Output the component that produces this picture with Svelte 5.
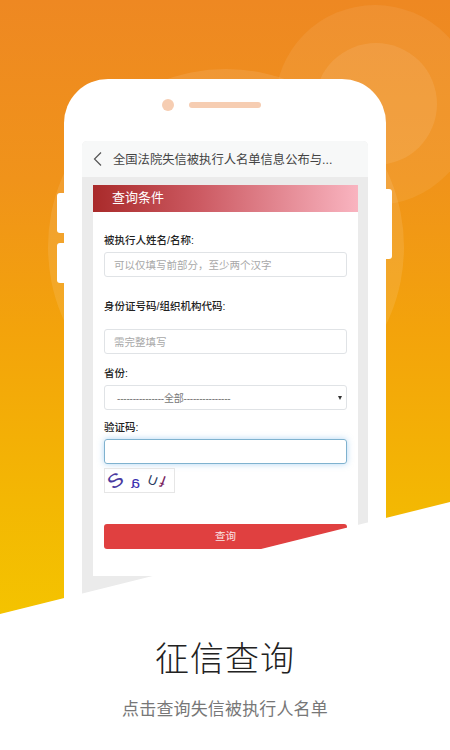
<script>
  const captcha = [
    { ch: "S", cls: "c1" },
    { ch: "a", cls: "c2" },
    { ch: "U", cls: "c3" },
    { ch: "f", cls: "c4" },
  ];
</script>

<div class="page">
  <div class="circle back"></div>
  <div class="circle big"></div>
  <div class="circle small"></div>

  <div class="phone">
    <span class="side left-a"></span>
    <span class="side left-b"></span>
    <span class="side right-a"></span>

    <div class="speaker">
      <span class="dot"></span>
      <span class="slot"></span>
    </div>

    <div class="screen">
      <div class="titlebar">
        <svg class="back-icon" width="10" height="16" viewBox="0 0 10 16">
          <path d="M8 1.5 1.5 8 8 14.5" fill="none" stroke="#555" stroke-width="1.2" />
        </svg>
        <span class="title">全国法院失信被执行人名单信息公布与...</span>
      </div>

      <div class="panel">
        <div class="panel-head">查询条件</div>
        <div class="form">
          <div class="label first">被执行人姓名/名称:</div>
          <div class="input"><span>可以仅填写前部分，至少两个汉字</span></div>

          <div class="label second">身份证号码/组织机构代码:</div>
          <div class="input id"><span>需完整填写</span></div>

          <div class="label third">省份:</div>
          <div class="input select">
            <span>---------------全部---------------</span>
            <i></i>
          </div>

          <div class="label fourth">验证码:</div>
          <div class="input focus"></div>
          <div class="captcha">
            {#each captcha as c}
              <span class={c.cls}>{c.ch}</span>
            {/each}
          </div>

          <div class="submit">查询</div>
        </div>
      </div>
    </div>
  </div>

  <div class="cover">
    <h1>征信查询</h1>
    <p>点击查询失信被执行人名单</p>
  </div>
</div>

<style>
  :global(body) {
    margin: 0;
  }

  .page {
    position: relative;
    width: 450px;
    height: 750px;
    overflow: hidden;
    padding-top: 79px;
    box-sizing: border-box;
    background: linear-gradient(180deg, #ee8822 0, #f0931a 180px, #f3a30b 330px, #f3b703 500px, #f4c300 614px);
    font-family: "Liberation Sans", "Noto Sans CJK SC", sans-serif;
  }

  .circle {
    position: absolute;
    border-radius: 50%;
    background: rgba(255, 255, 255, 0.07);
  }

  .back {
    left: 48px;
    top: 69px;
    width: 356px;
    height: 356px;
    background: rgba(255, 255, 255, 0.1);
  }

  .big {
    left: 275px;
    top: 5px;
    width: 200px;
    height: 200px;
  }

  .small {
    left: 315px;
    top: 43px;
    width: 122px;
    height: 122px;
    background: rgba(255, 255, 255, 0.09);
  }

  .phone {
    position: relative;
    width: 322px;
    height: 560px;
    margin-left: 64px;
    background: #fff;
    border-radius: 44px 44px 0 0;
  }

  .side {
    position: absolute;
    background: #fff;
  }

  .left-a {
    left: -7px;
    top: 114px;
    width: 7px;
    height: 40px;
    border-radius: 3px 0 0 3px;
  }

  .left-b {
    left: -7px;
    top: 164px;
    width: 7px;
    height: 40px;
    border-radius: 3px 0 0 3px;
  }

  .right-a {
    right: -6px;
    top: 110px;
    width: 6px;
    height: 70px;
    border-radius: 0 3px 3px 0;
  }

  .speaker {
    display: flex;
    align-items: center;
    gap: 15px;
    padding: 20px 0 0 98px;
    height: 12px;
  }

  .dot {
    width: 12px;
    height: 12px;
    border-radius: 50%;
    background: #f6cdb2;
  }

  .slot {
    width: 72px;
    height: 6px;
    border-radius: 3px;
    background: #f6cdb2;
  }

  .screen {
    margin: 30px 18px 0;
    height: 500px;
    background: #ebebeb;
    border-radius: 5px 5px 0 0;
  }

  .titlebar {
    display: flex;
    align-items: center;
    height: 36px;
    padding-left: 11px;
    background: #f7f8f8;
    border-radius: 5px 5px 0 0;
  }

  .back-icon {
    margin-right: 10px;
  }

  .title {
    font-size: 12.3px;
    color: #444;
    white-space: nowrap;
  }

  .panel {
    margin: 8px 10px 0 11px;
    height: 391px;
    background: #fff;
  }

  .panel-head {
    height: 27px;
    line-height: 26px;
    padding-left: 19px;
    font-size: 13px;
    color: #fff;
    background: linear-gradient(90deg, #a92a2a 0%, #cc5a62 40%, #f9b4c0 100%);
  }

  .form {
    padding: 0 11px;
  }

  .label {
    font-size: 10.5px;
    font-weight: 500;
    line-height: 14px;
    color: #222;
  }

  .first {
    padding-top: 21px;
    margin-bottom: 5px;
  }

  .second {
    margin-top: 22px;
    margin-bottom: 16px;
  }

  .third {
    margin-top: 12px;
    margin-bottom: 5px;
  }

  .fourth {
    margin-top: 10px;
    margin-bottom: 5px;
  }

  .input {
    display: flex;
    align-items: center;
    box-sizing: border-box;
    height: 25px;
    padding-left: 9px;
    border: 1px solid #e0e3e6;
    border-radius: 3px;
    font-size: 10.5px;
    color: #a8a8a8;
  }

  .select {
    position: relative;
    padding-left: 12px;
    color: #777;
    font-size: 10px;
    letter-spacing: -0.2px;
  }

  .select i {
    position: absolute;
    right: 4px;
    top: 10px;
    border-left: 2px solid transparent;
    border-right: 2px solid transparent;
    border-top: 4px solid #333;
  }

  .focus {
    border-color: #7fb2cf;
    box-shadow: 0 0 6px rgba(102, 175, 233, 0.5);
  }

  .captcha {
    display: flex;
    align-items: center;
    box-sizing: border-box;
    width: 71px;
    height: 25px;
    margin-top: 4px;
    padding-left: 4px;
    border: 1px solid #e6e6e6;
    font-family: "Liberation Sans", sans-serif;
    font-size: 16px;
  }

  .captcha span {
    display: block;
    line-height: 1;
  }

  .c1 {
    font-size: 19px;
    transform: rotate(-35deg) scaleX(1.2);
    color: #4a3aa0;
  }

  .c2 {
    margin-left: 9px;
    transform: translateY(2px) scaleX(-1);
    color: #3a2fb0;
  }

  .c3 {
    margin-left: 8px;
    transform: rotate(20deg);
    font-size: 13px;
    color: #2a3a60;
  }

  .c4 {
    margin-left: 4px;
    transform: rotate(-160deg);
    font-size: 16px;
    color: #7a1f60;
  }

  .submit {
    height: 25px;
    margin-top: 31px;
    line-height: 24px;
    text-align: center;
    font-size: 10.5px;
    color: #fbe6e6;
    background: #e04040;
    border-radius: 3px;
  }

  .cover {
    position: absolute;
    left: 0;
    right: 0;
    bottom: 0;
    height: 248px;
    padding-top: 133px;
    box-sizing: border-box;
    text-align: center;
    background: #fff;
    clip-path: polygon(0 112px, 100% 0, 100% 100%, 0 100%);
  }

  h1 {
    margin: 0;
    font-size: 34px;
    font-weight: 200;
    line-height: 48px;
    letter-spacing: 1px;
    color: #222;
  }

  p {
    margin: 15px 0 0;
    font-size: 17px;
    line-height: 24px;
    letter-spacing: 0.15px;
    color: #777;
  }
</style>
